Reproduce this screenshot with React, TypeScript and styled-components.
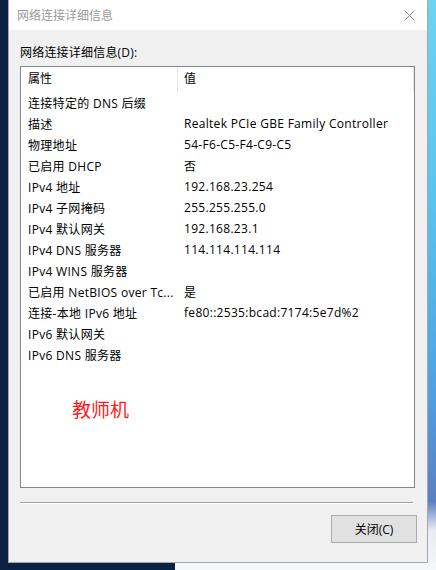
import styled, { createGlobalStyle } from 'styled-components';

const GlobalStyle = createGlobalStyle`
  html, body {
    margin: 0;
    padding: 0;
  }
  body {
    font-family: 'Open Sans', 'Noto Sans CJK SC', sans-serif;
    font-size: 12px;
    color: #000;
  }
`;

// the desktop behind the dialog: navy wallpaper on the left, a blue app window on the right
const Desktop = styled.div`
  width: 436px;
  height: 570px;
  box-sizing: border-box;
  padding-left: 8px;
  overflow: hidden;
  display: flex;
  align-items: flex-start;
  background:
    linear-gradient(#f4f6f8, #f4f6f8) right bottom / 261px 7px no-repeat,
    linear-gradient(180deg, #6fd3f2 0%, #58c4ee 35%, #4f9fe2 70%, #5b7fc0 88%, #e8ecf2 93%, #f4f6f8 100%) right top / 8px 100% no-repeat,
    #0b2141;
`;

const Dialog = styled.div`
  width: 420px;
  height: 563px;
  box-sizing: border-box;
  border: 1px solid #a8a8a8;
  border-top: none;
  background: #f0f0f0;
  display: flex;
  flex-direction: column;
`;

const TitleBar = styled.div`
  height: 30px;
  flex: none;
  background: #fff;
  display: flex;
  align-items: center;
  padding-left: 8px;
`;

const Title = styled.div`
  flex: 1;
  color: #999;
  font-size: 12px;
`;

const CloseButton = styled.div`
  width: 34px;
  height: 30px;
  display: flex;
  align-items: center;
  justify-content: center;
  margin-right: 1px;
`;

const Body = styled.div`
  flex: 1;
  display: flex;
  flex-direction: column;
  padding: 14px 11px 0 11px;
`;

const FieldLabel = styled.div`
  height: 17px;
  line-height: 17px;
  margin-bottom: 5px;
  letter-spacing: 0.2px;
`;

const ListBox = styled.div`
  height: 422px;
  box-sizing: border-box;
  border: 1px solid #828790;
  background: #fff;
  margin-right: 1px;
`;

const HeaderRow = styled.div`
  height: 25px;
  display: grid;
  grid-template-columns: 156px 1fr 1px;
`;

const HeaderCell = styled.div<{ $divider?: boolean }>`
  padding-left: ${(p) => (p.$divider ? '6px' : '7px')};
  line-height: 24px;
  border-left: ${(p) => (p.$divider ? '1px solid #e5e5e5' : 'none')};
`;

const HeaderEdge = styled.div`
  background: #e5e5e5;
`;

const Row = styled.div`
  height: 21px;
  display: grid;
  grid-template-columns: 157px 1fr;
  align-items: center;
`;

const Cell = styled.div<{ $value?: boolean }>`
  padding-left: ${(p) => (p.$value ? '6px' : '7px')};
  white-space: nowrap;
  overflow: hidden;
  letter-spacing: 0.3px;
`;

const Note = styled.div`
  margin-top: 32px;
  padding-left: 51px;
  color: #ff1a1a;
  font-size: 19px;
  line-height: 26px;
`;

const Separator = styled.div`
  height: 1px;
  background: #a0a0a0;
  margin: 14px 3px 0 0;
  border-bottom: 1px solid #fff;
`;

const Footer = styled.div`
  display: flex;
  justify-content: flex-end;
  padding-top: 11px;
  margin-right: -1px;
`;

const Button = styled.button`
  width: 86px;
  height: 28px;
  box-sizing: border-box;
  border: 1px solid #adadad;
  background: #e1e1e1;
  font-family: inherit;
  font-size: 12px;
  color: #000;
  padding: 0;
`;

const rows: [string, string][] = [
  ['连接特定的 DNS 后缀', ''],
  ['描述', 'Realtek PCIe GBE Family Controller'],
  ['物理地址', '54-F6-C5-F4-C9-C5'],
  ['已启用 DHCP', '否'],
  ['IPv4 地址', '192.168.23.254'],
  ['IPv4 子网掩码', '255.255.255.0'],
  ['IPv4 默认网关', '192.168.23.1'],
  ['IPv4 DNS 服务器', '114.114.114.114'],
  ['IPv4 WINS 服务器', ''],
  ['已启用 NetBIOS over Tc...', '是'],
  ['连接-本地 IPv6 地址', 'fe80::2535:bcad:7174:5e7d%2'],
  ['IPv6 默认网关', ''],
  ['IPv6 DNS 服务器', ''],
];

export default function App() {
  return (
    <>
      <GlobalStyle />
      <Desktop>
        <Dialog>
          <TitleBar>
            <Title>网络连接详细信息</Title>
            <CloseButton>
              <svg width='11' height='11' viewBox='0 0 11 11'>
                <path d='M0.5 0.5 L10.5 10.5 M10.5 0.5 L0.5 10.5' stroke='#8a8a8a' strokeWidth='1' fill='none' />
              </svg>
            </CloseButton>
          </TitleBar>
          <Body>
            <FieldLabel>网络连接详细信息(D):</FieldLabel>
            <ListBox>
              <HeaderRow>
                <HeaderCell>属性</HeaderCell>
                <HeaderCell $divider>值</HeaderCell>
                <HeaderEdge />
              </HeaderRow>
              {rows.map(([name, value]) => (
                <Row key={name}>
                  <Cell>{name}</Cell>
                  <Cell $value>{value}</Cell>
                </Row>
              ))}
              <Note>教师机</Note>
            </ListBox>
            <Separator />
            <Footer>
              <Button>关闭(C)</Button>
            </Footer>
          </Body>
        </Dialog>
      </Desktop>
    </>
  );
}
